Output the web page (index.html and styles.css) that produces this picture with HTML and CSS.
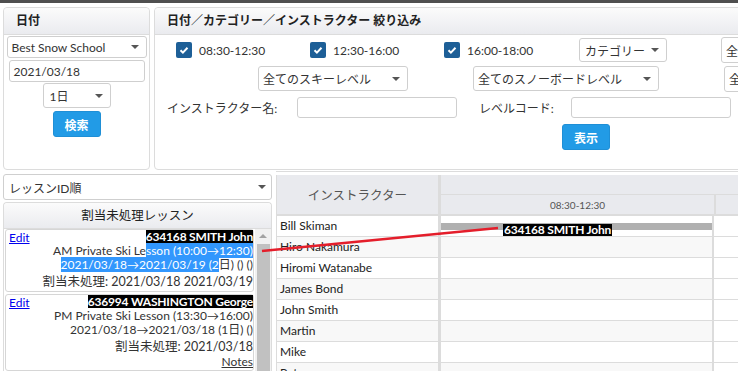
FILE: index.html
```
<!DOCTYPE html>
<html>

<head>
    <title>Lesson Assign</title>
    <link rel="stylesheet" href="styles.css">
</head>

<body>
    <div class="topbar"></div>

    <div class="top">
        <div class="panel panel-date">
            <div class="panel-head">日付</div>
            <div class="date-body">
                <div class="select sel-school">Best Snow School<span class="caret"></span></div>
                <div class="input input-date">2021/03/18</div>
                <div class="select sel-days">1日<span class="caret"></span></div>
                <div class="btn btn-search">検索</div>
            </div>
        </div>

        <div class="panel panel-filter">
            <div class="panel-head">日付／カテゴリー／インストラクター 絞り込み</div>

            <div class="frow frow-times">
                <label class="check"><span class="box"><svg width="16" height="16" viewBox="0 0 16 16"><path d="M4.5 8.2l2.4 2.4 4.6-4.8" fill="none" stroke="#fff" stroke-width="2"/></svg></span>08:30-12:30</label>
                <label class="check"><span class="box"><svg width="16" height="16" viewBox="0 0 16 16"><path d="M4.5 8.2l2.4 2.4 4.6-4.8" fill="none" stroke="#fff" stroke-width="2"/></svg></span>12:30-16:00</label>
                <label class="check"><span class="box"><svg width="16" height="16" viewBox="0 0 16 16"><path d="M4.5 8.2l2.4 2.4 4.6-4.8" fill="none" stroke="#fff" stroke-width="2"/></svg></span>16:00-18:00</label>
                <div class="select sel-cat">カテゴリー<span class="caret"></span></div>
                <div class="select sel-all1">全てのインストラクター<span class="caret"></span></div>
            </div>

            <div class="frow frow-levels">
                <div class="select sel-ski">全てのスキーレベル<span class="caret"></span></div>
                <div class="select sel-board">全てのスノーボードレベル<span class="caret"></span></div>
                <div class="select sel-all2">全てのレベル<span class="caret"></span></div>
            </div>

            <div class="frow frow-text">
                <span class="flabel flabel-name">インストラクター名:</span>
                <div class="input input-name"></div>
                <span class="flabel flabel-code">レベルコード:</span>
                <div class="input input-code"></div>
            </div>

            <div class="frow frow-btn">
                <div class="btn btn-show">表示</div>
            </div>
        </div>
    </div>

    <div class="bottom">
        <div class="left">
            <div class="select sel-order">レッスンID順<span class="caret"></span></div>

            <div class="panel panel-lessons">
                <div class="panel-head center">割当未処理レッスン</div>
                <div class="lesson-wrap">
                    <div class="lesson-list">
                        <div class="card">
                            <a class="edit" href="#">Edit</a>
                            <div class="line"><span class="tag">634168 SMITH John</span></div>
                            <div class="line">AM Private Ski Le<span class="sel">sson (10:00→12:30)</span></div>
                            <div class="line"><span class="sel">2021/03/18→2021/03/19 (2</span>日) () ()</div>
                            <div class="line big">割当未処理: 2021/03/18 2021/03/19</div>
                        </div>
                        <div class="card">
                            <a class="edit" href="#">Edit</a>
                            <div class="line"><span class="tag">636994 WASHINGTON George</span></div>
                            <div class="line">PM Private Ski Lesson (13:30→16:00)</div>
                            <div class="line">2021/03/18→2021/03/18 (1日) ()</div>
                            <div class="line big">割当未処理: 2021/03/18</div>
                            <div class="line"><span class="notes">Notes</span></div>
                        </div>
                    </div>
                    <div class="scrollbar">
                        <span class="sb-up"></span>
                        <div class="sb-thumb"></div>
                    </div>
                </div>
            </div>
        </div>

        <div class="schedule">
            <div class="sched-head">
                <div class="head-name">インストラクター</div>
                <div class="head-times">
                    <div class="head-date"></div>
                    <div class="head-slots">
                        <div class="head-slot">08:30-12:30</div>
                        <div class="head-slot2"></div>
                    </div>
                </div>
            </div>

            <div class="srow">
                <div class="name-cell">Bill Skiman</div>
                <div class="slot-cell">
                    <div class="bar"></div>
                    <span class="bar-tag">634168 SMITH John</span>
                </div>
                <div class="slot-cell2"></div>
            </div>
            <div class="srow">
                <div class="name-cell">Hiro Nakamura</div>
                <div class="slot-cell"></div>
                <div class="slot-cell2"></div>
            </div>
            <div class="srow">
                <div class="name-cell">Hiromi Watanabe</div>
                <div class="slot-cell"></div>
                <div class="slot-cell2"></div>
            </div>
            <div class="srow">
                <div class="name-cell">James Bond</div>
                <div class="slot-cell"></div>
                <div class="slot-cell2"></div>
            </div>
            <div class="srow">
                <div class="name-cell">John Smith</div>
                <div class="slot-cell"></div>
                <div class="slot-cell2"></div>
            </div>
            <div class="srow">
                <div class="name-cell">Martin</div>
                <div class="slot-cell"></div>
                <div class="slot-cell2"></div>
            </div>
            <div class="srow">
                <div class="name-cell">Mike</div>
                <div class="slot-cell"></div>
                <div class="slot-cell2"></div>
            </div>
            <div class="srow">
                <div class="name-cell">Peter</div>
                <div class="slot-cell"></div>
                <div class="slot-cell2"></div>
            </div>
        </div>
    </div>

    <!-- drag link from the lesson card to the assigned slot -->
    <svg class="link-line" width="738" height="371" viewBox="0 0 738 371">
        <line x1="262" y1="251" x2="498" y2="228" stroke="#e41e2b" stroke-width="2.5"/>
    </svg>
</body>

</html>
```

FILE: styles.css
```
html, body {
    margin: 0;
    padding: 0;
}

body {
    width: 738px;
    height: 371px;
    overflow: hidden;
    position: relative;
    background: #fff;
    color: #333;
    font-family: Lato, "Noto Sans CJK JP", sans-serif;
    font-size: 12px;
}

.topbar {
    height: 3px;
    background: #4f4f4f;
    width: 738px;
}

.top {
    display: flex;
    gap: 4px;
    padding-left: 3px;
    margin-top: 4px;
    height: 163px;
    width: 735px;
    overflow: hidden;
}

.panel {
    border: 1px solid #dcdcdc;
    border-radius: 4px;
    box-sizing: border-box;
    background: #fff;
}

.panel-head {
    height: 26px;
    line-height: 26px;
    border-bottom: 1px solid #dcdcdc;
    background: linear-gradient(#fbfbfb, #eaebef);
    border-radius: 4px 4px 0 0;
    padding-left: 12px;
    font-weight: bold;
    color: #222;
    white-space: nowrap;
}

.panel-head.center {
    text-align: center;
    padding-left: 0;
    font-weight: normal;
    height: 25px;
    line-height: 25px;
    font-size: 12.5px;
}

.panel-date {
    width: 147px;
    height: 163px;
    flex-shrink: 0;
}

.panel-filter {
    width: 640px;
    height: 163px;
    flex-shrink: 0;
}

/* form bits */
.select {
    display: flex;
    align-items: center;
    box-sizing: border-box;
    border: 1px solid #cfcfcf;
    border-radius: 3px;
    background: #fff;
    padding-left: 4px;
    white-space: nowrap;
    overflow: hidden;
    color: #333;
}

.caret {
    margin-left: auto;
    margin-right: 7px;
    flex-shrink: 0;
    width: 0;
    height: 0;
    border-left: 4px solid transparent;
    border-right: 4px solid transparent;
    border-top: 4px solid #555;
}

.input {
    box-sizing: border-box;
    border: 1px solid #cfcfcf;
    border-radius: 3px;
    background: #fff;
    padding-left: 4px;
    display: flex;
    align-items: center;
}

.btn {
    box-sizing: border-box;
    background: #229be6;
    border: 1px solid #1f8fd6;
    border-radius: 3px;
    color: #fff;
    font-weight: bold;
    display: flex;
    align-items: center;
    justify-content: center;
}

/* date panel */
.date-body {
    display: flex;
    flex-direction: column;
    align-items: center;
}

.sel-school {
    width: 140px;
    height: 22px;
    margin-top: 1px;
}

.input-date {
    width: 136px;
    height: 22px;
    margin-top: 2px;
}

.sel-days {
    width: 68px;
    height: 25px;
    margin-top: 1px;
    padding-left: 6px;
}

.btn-search {
    width: 48px;
    height: 26px;
    margin-top: 3px;
}

/* filter panel */
.frow {
    display: flex;
    align-items: center;
    white-space: nowrap;
}

.frow-times {
    margin-top: 2px;
    height: 26px;
    padding-left: 21px;
}

.check {
    width: 134px;
    display: flex;
    align-items: center;
    flex-shrink: 0;
}

.box {
    width: 16px;
    height: 16px;
    border-radius: 2px;
    background: #1d5f97;
    margin-right: 7px;
    display: flex;
}

.sel-cat {
    width: 88px;
    height: 24px;
    margin-left: 1px;
    padding-left: 5px;
    flex-shrink: 0;
}

.sel-all1 {
    width: 200px;
    height: 26px;
    margin-left: 54px;
    flex-shrink: 0;
}

.frow-levels {
    margin-top: 3px;
    height: 25px;
    padding-left: 103px;
}

.sel-ski {
    width: 150px;
    height: 25px;
    flex-shrink: 0;
}

.sel-board {
    width: 186px;
    height: 25px;
    margin-left: 65px;
    flex-shrink: 0;
}

.sel-all2 {
    width: 200px;
    height: 26px;
    margin-left: 65px;
    flex-shrink: 0;
}

.frow-text {
    margin-top: 6px;
    height: 21px;
    padding-left: 12px;
}

.flabel-name {
    width: 130px;
    flex-shrink: 0;
}

.flabel-code {
    width: 92px;
    margin-left: 22px;
    flex-shrink: 0;
}

.input-name,
.input-code {
    width: 160px;
    height: 21px;
    flex-shrink: 0;
}

.frow-btn {
    margin-top: 6px;
    padding-left: 407px;
}

.btn-show {
    width: 48px;
    height: 26px;
}

/* bottom part */
.bottom {
    display: flex;
    margin-top: 1px;
}

.left {
    width: 269px;
    margin-left: 3px;
    flex-shrink: 0;
}

.sel-order {
    width: 269px;
    height: 26px;
    margin-top: 3px;
    padding-left: 5px;
}

.sel-order .caret {
    margin-right: 5px;
}

.panel-lessons {
    margin-top: 2px;
    height: 200px;
    border-bottom: none;
    border-radius: 4px 4px 0 0;
}

.lesson-wrap {
    display: flex;
    padding-left: 1px;
}

.lesson-list {
    width: 249px;
}

.card {
    box-sizing: border-box;
    border: 1px solid #d6d6d6;
    border-radius: 3px;
    padding: 0 0 1px 3px;
    margin-bottom: 2px;
    text-align: right;
    line-height: 14px;
    white-space: nowrap;
}

.edit {
    float: left;
    color: #0000ee;
    text-decoration: underline;
    margin-top: 1px;
}

.line {
    height: 14px;
}

.line.big {
    font-size: 12.5px;
    height: 16px;
    line-height: 16px;
    margin-top: 2px;
}

.tag {
    background: #000;
    color: #fff;
    font-weight: bold;
    display: inline-block;
    line-height: 13px;
    letter-spacing: -0.2px;
}

.sel {
    background: #3297fd;
    color: #fff;
}

.notes {
    text-decoration: underline;
}

.scrollbar {
    width: 16px;
    margin-left: 1px;
    height: 150px;
    background: #f1f1f1;
    display: flex;
    flex-direction: column;
    align-items: center;
}

.sb-up {
    margin-top: 5px;
    width: 0;
    height: 0;
    border-left: 4px solid transparent;
    border-right: 4px solid transparent;
    border-bottom: 4px solid #a3a3a3;
}

.sb-thumb {
    margin-top: 6px;
    width: 13px;
    flex: 1;
    background: #c1c1c1;
}

/* schedule grid */
.schedule {
    margin-left: 4px;
    border-top: 1px solid #dcdcdc;
    padding-top: 3px;
    width: 462px;
    flex-shrink: 0;
}

.sched-head {
    display: flex;
    height: 39px;
    border-left: 1px solid #dcdcdc;
    border-bottom: 2px solid #dcdcdc;
    background: #e9eaee;
    color: #555;
}

.head-name {
    width: 161px;
    display: flex;
    align-items: center;
    justify-content: center;
    font-size: 12.5px;
}

.head-times {
    flex: 1;
    border-left: 3px solid #dcdcdc;
    display: flex;
    flex-direction: column;
}

.head-date {
    height: 19px;
    border-bottom: 1px solid #dcdcdc;
}

.head-slots {
    flex: 1;
    display: flex;
}

.head-slot {
    width: 273px;
    font-size: 10px;
    display: flex;
    align-items: center;
    justify-content: center;
}

.head-slot2 {
    flex: 1;
    border-left: 2px solid #dcdcdc;
}

.srow {
    display: flex;
    height: 20px;
    border-bottom: 1px solid #dcdcdc;
    border-left: 1px solid #dcdcdc;
    background: #fff;
}

.srow:nth-child(odd) {
    background: #f8f8f8;
}

.name-cell {
    width: 158px;
    padding-left: 3px;
    line-height: 20px;
    color: #222;
}

.slot-cell {
    width: 271px;
    border-left: 3px solid #dcdcdc;
    position: relative;
}

.slot-cell2 {
    flex: 1;
    border-left: 2px solid #dcdcdc;
    background: #fff;
}

.bar {
    margin-top: 7px;
    height: 7px;
    background: #b0b0b0;
}

.bar-tag {
    position: absolute;
    left: 62px;
    top: 8px;
    background: #000;
    color: #fff;
    font-weight: bold;
    font-size: 12px;
    line-height: 12px;
    padding: 0 1px;
    letter-spacing: -0.2px;
}

.link-line {
    position: absolute;
    left: 0;
    top: 0;
    pointer-events: none;
}
```
